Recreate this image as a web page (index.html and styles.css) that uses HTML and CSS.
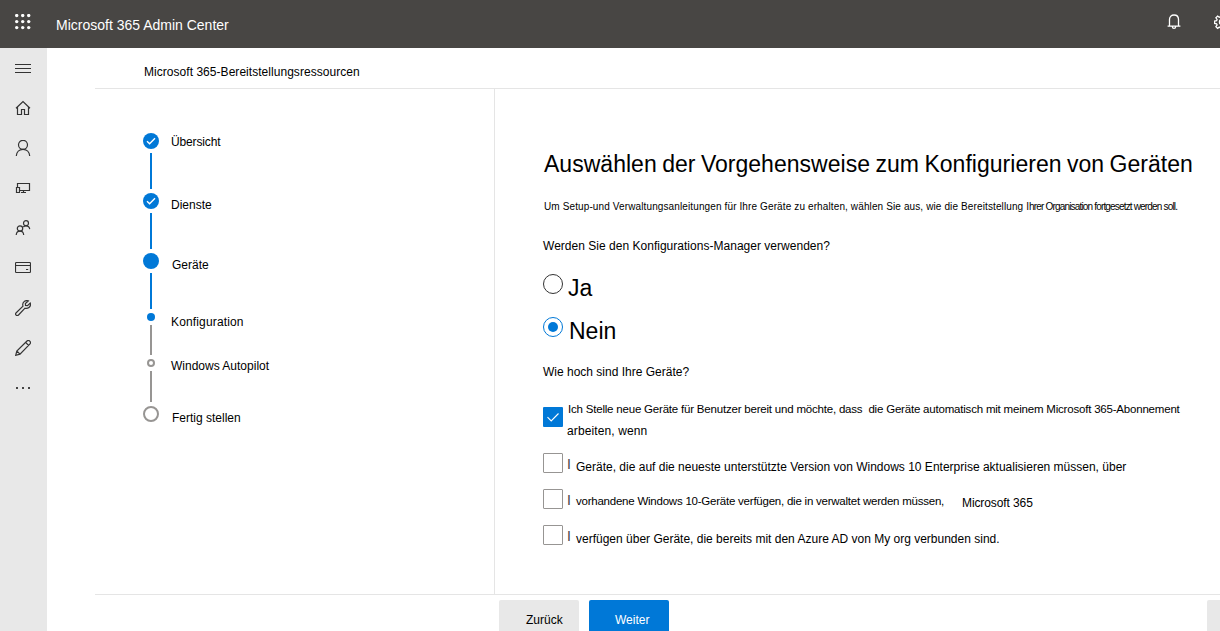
FILE: index.html
```html
<!DOCTYPE html>
<html lang="de">
<head>
<meta charset="utf-8">
<title>Microsoft 365 Admin Center</title>
<link rel="stylesheet" href="styles.css">
</head>
<body>
<header class="topbar">
  <svg class="waffle" width="16" height="16" viewBox="0 0 16 16"><g fill="#fff"><circle cx="1.7" cy="1.6" r="1.7"/><circle cx="7.7" cy="1.6" r="1.7"/><circle cx="13.7" cy="1.6" r="1.7"/><circle cx="1.7" cy="7.6" r="1.7"/><circle cx="7.7" cy="7.6" r="1.7"/><circle cx="13.7" cy="7.6" r="1.7"/><circle cx="1.7" cy="13.6" r="1.7"/><circle cx="7.7" cy="13.6" r="1.7"/><circle cx="13.7" cy="13.6" r="1.7"/></g></svg>
  <span class="brand">Microsoft 365 Admin Center</span>
  <svg class="bell" width="14" height="16" viewBox="0 0 14 16" fill="none" stroke="#fff" stroke-width="1.3"><path d="M2.500 12V5.600C2.500 2.800 4.500 1 7 1s4.500 1.800 4.500 4.600V12M.6 12.200h12.800M5.300 12.500c.1 1.300.8 1.900 1.700 1.900s1.600-.6 1.700-1.900"/></svg>
  <svg class="gear" width="6" height="16" viewBox="0 0 6 16" fill="none" stroke="#fff" stroke-width="1.3"><path d="M6.800.8h2.400l.4 2 1.100.5 1.700-1.200 1.700 1.700-1.200 1.700.5 1.100 2 .4v2.400l-2 .4-.5 1.100 1.200 1.700-1.700 1.700-1.700-1.200-1.100.5-.4 2H6.800l-.4-2-1.100-.5-1.700 1.200-1.700-1.700 1.200-1.700-.5-1.100-2-.4V7l2-.4.5-1.100-1.200-1.700 1.700-1.700 1.700 1.200 1.100-.5z"/><circle cx="8" cy="8" r="2.600"/></svg>
</header>
<div class="shell">
  <nav class="sidebar">
    <a class="nav-item"><svg width="16" height="16" viewBox="0 0 16 16"><path d="M0 4.500h16M0 8.500h16M0 12.500h16"/></svg></a>
    <a class="nav-item"><svg width="16" height="16" viewBox="0 0 16 16"><path d="M1 8.300 8 1.500l7 6.800M2.500 7v7.500h4v-5h3v5h4V7"/></svg></a>
    <a class="nav-item"><svg width="16" height="16" viewBox="0 0 16 16"><circle cx="8" cy="4.800" r="4.500"/><path d="M1.300 16c.2-4 3-6.700 6.700-6.700s6.500 2.700 6.700 6.700"/></svg></a>
    <a class="nav-item"><svg width="16" height="16" viewBox="0 0 16 16"><path d="M2.500 7V3.500h12v7H5M1.500 7.500h3v5h-3zM8.500 10.500v2M6 12.500h5"/></svg></a>
    <a class="nav-item"><svg width="16" height="16" viewBox="0 0 16 16"><circle cx="11" cy="3.200" r="2.500"/><circle cx="5" cy="8.500" r="2.700"/><path d="M1.200 15c.2-2.300 1.800-3.800 3.800-3.800s3.500 1.500 3.700 3.800M8.300 7c.7-.8 1.600-1.200 2.700-1.200 2 0 3.500 1.200 3.700 3.300"/></svg></a>
    <a class="nav-item"><svg width="16" height="16" viewBox="0 0 16 16"><rect x=".5" y="2.500" width="15" height="10" rx=".8"/><path d="M.5 5.500h15M11 9.500h2.200"/></svg></a>
    <a class="nav-item"><svg width="16" height="16" viewBox="0 0 16 16"><path d="M13.300.9c-2.600-1-5.600.7-5.600 3.700 0 .5.1 1 .3 1.500L1.200 12.700c-1.600 1.700.6 4 2.300 2.300L10 8.200c3 .9 5.700-1.300 5.500-4.200l-.3-1-2.700 2.600-2-.1-.1-2z"/></svg></a>
    <a class="nav-item"><svg width="16" height="16" viewBox="0 0 16 16"><path d="M.7 15.300 1.800 11 12 1c1.800-1.600 4.500.9 3 2.900L5 14.200zM1.800 11 5 14.200M10.600 2.300l3.100 3.200"/></svg></a>
    <a class="nav-item"><svg width="16" height="16" viewBox="0 0 16 16"><g class="dots"><rect x="1" y="7" width="2" height="2"/><rect x="7" y="7" width="2" height="2"/><rect x="13" y="7" width="2" height="2"/></g></svg></a>
  </nav>
  <main class="page">
    <div class="page-title"><span class="title-text">Microsoft 365-Bereitstellungsressourcen</span></div>
    <div class="columns">
      <ol class="steps">
        <li class="step step-major"><div class="rail"><svg class="marker" width="16" height="16" viewBox="0 0 16 16"><circle cx="8" cy="8" r="8" fill="#0078d7"/><path d="m4 8.200 2.600 2.500L12 5.300" fill="none" stroke="#fff" stroke-width="1.400"/></svg><i class="line"></i></div><span class="label l-overview">Übersicht</span></li>
        <li class="step step-major"><div class="rail"><svg class="marker" width="16" height="16" viewBox="0 0 16 16"><circle cx="8" cy="8" r="8" fill="#0078d7"/><path d="m4 8.200 2.600 2.500L12 5.300" fill="none" stroke="#fff" stroke-width="1.400"/></svg><i class="line"></i></div><span class="label low">Dienste</span></li>
        <li class="step step-major"><div class="rail"><i class="dot"></i><i class="line"></i></div><span class="label low shifted">Geräte</span></li>
        <li class="step step-config"><div class="rail"><i class="dot small"></i><i class="line pending"></i></div><span class="label l-config">Konfiguration</span></li>
        <li class="step step-autopilot"><div class="rail"><i class="ring small"></i><i class="line pending"></i></div><span class="label high">Windows Autopilot</span></li>
        <li class="step"><div class="rail"><i class="ring"></i></div><span class="label low shifted">Fertig stellen</span></li>
      </ol>
      <section class="content">
        <h1>Auswählen der Vorgehensweise zum Konfigurieren von Geräten</h1>
        <p class="intro"><span class="intro-a">Um Setup-und Verwaltungsanleitungen für Ihre Geräte zu erhalten, wählen Sie aus, wie die Bereitstellung I</span><span class="intro-b">hrer Organisation fortgesetzt werden soll.</span></p>
        <p class="question q-manager">Werden Sie den Konfigurations-Manager verwenden?</p>
        <label class="radio"><i class="radio-mark"></i><span>Ja</span></label>
        <label class="radio"><i class="radio-mark on"></i><span class="shifted">Nein</span></label>
        <p class="question q-devices">Wie hoch sind Ihre Geräte?</p>
        <div class="checks">
          <label class="check first"><svg class="box-on" width="20" height="20" viewBox="0 0 20 20"><rect width="20" height="20" rx="1" fill="#0078d7"/><path d="m4.500 10.200 3.700 3.700 7.300-7.400" fill="none" stroke="#fff" stroke-width="1.100"/></svg><span class="check-text two-line"><span class="c1a">Ich Stelle neue Geräte für Benutzer bereit und möchte, dass&nbsp; die Geräte automatisch mit meinem Microsoft 365-Abonnement</span><br><span class="c1b">arbeiten, wenn</span></span></label>
          <label class="check"><i class="box"></i><span class="bar">I</span><span class="check-text c2">Geräte, die auf die neueste unterstützte Version von Windows 10 Enterprise aktualisieren müssen, über</span></label>
          <label class="check"><i class="box"></i><span class="bar">I</span><span class="check-text c3">vorhandene Windows 10-Geräte verfügen, die in verwaltet werden müssen,</span><span class="product">Microsoft 365</span></label>
          <label class="check"><i class="box"></i><span class="bar">I</span><span class="check-text c4">verfügen über Geräte, die bereits mit den Azure AD von My org verbunden sind.</span></label>
        </div>
      </section>
    </div>
    <footer class="actions">
      <button class="btn">Zurück</button>
      <button class="btn primary">Weiter</button>
      <button class="btn trailing" aria-label="Schließen"></button>
    </footer>
  </main>
</div>
</body>
</html>
```

FILE: styles.css
```css
* { box-sizing: border-box; }
body {
  margin: 0;
  width: 1220px;
  height: 631px;
  overflow: hidden;
  background: #fff;
  color: #000;
  font: 12px/16px "Liberation Sans", Arial, sans-serif;
}
svg { display: block; flex: none; }
h1, p, ol { margin: 0; padding: 0; font-weight: normal; }

.topbar {
  display: flex;
  align-items: flex-start;
  height: 48px;
  background: #484644;
  color: #fff;
}
.waffle { margin: 14px 0 0 15px; }
.brand { margin: 17px 0 0 25px; font-size: 14px; white-space: nowrap; }
.bell { margin: 14px 0 0 auto; }
.gear { margin: 14px 0 0 33px; }

.shell { display: flex; height: 583px; overflow: hidden; }
.sidebar { flex: none; width: 47px; background: #e8e8e8; }
.nav-item { display: flex; height: 40px; padding: 12px 0 0 15px; }
.nav-item svg { fill: none; stroke: #333; stroke-width: 1.2; }
.nav-item .dots { fill: #444; stroke: none; }

.page { flex: 1; min-width: 0; padding-left: 48px; white-space: nowrap; }
.page-title { height: 41px; padding: 16px 0 0 49px; border-bottom: 1px solid #e5e5e5; }
.title-text { letter-spacing: .04px; }
.columns { display: flex; height: 505px; }

.steps { flex: none; width: 400px; padding: 44px 0 0 48px; border-right: 1px solid #e5e5e5; list-style: none; }
.step { display: flex; gap: 12px; }
.step-major { height: 60px; }
.step-config { height: 46px; }
.step-autopilot { height: 47px; }
.rail { display: flex; flex-direction: column; align-items: center; gap: 4px; width: 16px; padding-bottom: 4px; }
.line { flex: 1; width: 2px; background: #0078d7; }
.line.pending { background: #979593; }
.dot, .ring { flex: none; width: 16px; height: 16px; border-radius: 50%; }
.dot { background: #0078d7; }
.ring { border: 2px solid #979593; }
.small { width: 8px; height: 8px; }
.label { margin-top: 1px; }
.label.low { margin-top: 4px; }
.label.high { margin-top: -1px; }
.shifted { padding-left: 1px; }
.l-overview { letter-spacing: -.15px; }
.l-config { letter-spacing: .15px; }

.content { flex: 1; min-width: 0; padding: 61px 0 0 48px; }
h1 { padding-left: 1px; font-size: 23px; line-height: 28px; letter-spacing: .025px; word-spacing: -1px; }
.intro { margin: 21px 0 23px 1px; font-size: 10px; }
.intro-a { letter-spacing: .12px; }
.intro-b { letter-spacing: -.83px; }
.radio { display: flex; gap: 5px; height: 43px; font-size: 23px; line-height: 28px; }
.q-manager { margin-bottom: 20px; letter-spacing: .02px; }
.q-devices { margin-top: 4px; }
.radio-mark { display: grid; place-items: center; width: 20px; height: 20px; border: 1px solid #333; border-radius: 50%; }
.radio-mark.on { border-color: #0078d7; }
.radio-mark.on::after { content: ""; width: 10px; height: 10px; border-radius: 50%; background: #0078d7; }

.checks { padding-top: 18px; }
.check { display: flex; height: 36px; }
.check.first { height: 55px; }
.box-on { margin-top: 9px; }
.two-line { margin-left: 4px; line-height: 22px; }
.c1a { padding-left: 1px; font-size: 11.5px; letter-spacing: -.2px; }
.c1b { letter-spacing: .12px; }
.box { flex: none; width: 20px; height: 20px; border: 1px solid #979593; border-radius: 1px; }
.bar { width: 5px; margin: 3px 4px 0 4px; color: #444; font-size: 14px; }
.c2, .c4 { margin-top: 6px; }
.c3 { width: 368px; margin-top: 4px; font-size: 11.5px; letter-spacing: -.23px; }
.product { margin: 6px 0 0 18px; letter-spacing: -.1px; }

.actions { display: flex; gap: 10px; height: 37px; padding: 5px 0 0 404px; border-top: 1px solid #e5e5e5; }
.btn {
  flex: none;
  width: 80px;
  height: 40px;
  padding: 12px 0 12px 27px;
  border: 0;
  border-radius: 2px;
  background: #e8e8e8;
  color: #000;
  font: 12px/16px "Liberation Sans", Arial, sans-serif;
  text-align: left;
}
.btn.primary { background: #0078d7; color: #fff; padding-left: 26px; }
.btn.trailing { width: 13px; margin-left: 528px; padding: 0; border-radius: 2px 0 0 2px; }
```
